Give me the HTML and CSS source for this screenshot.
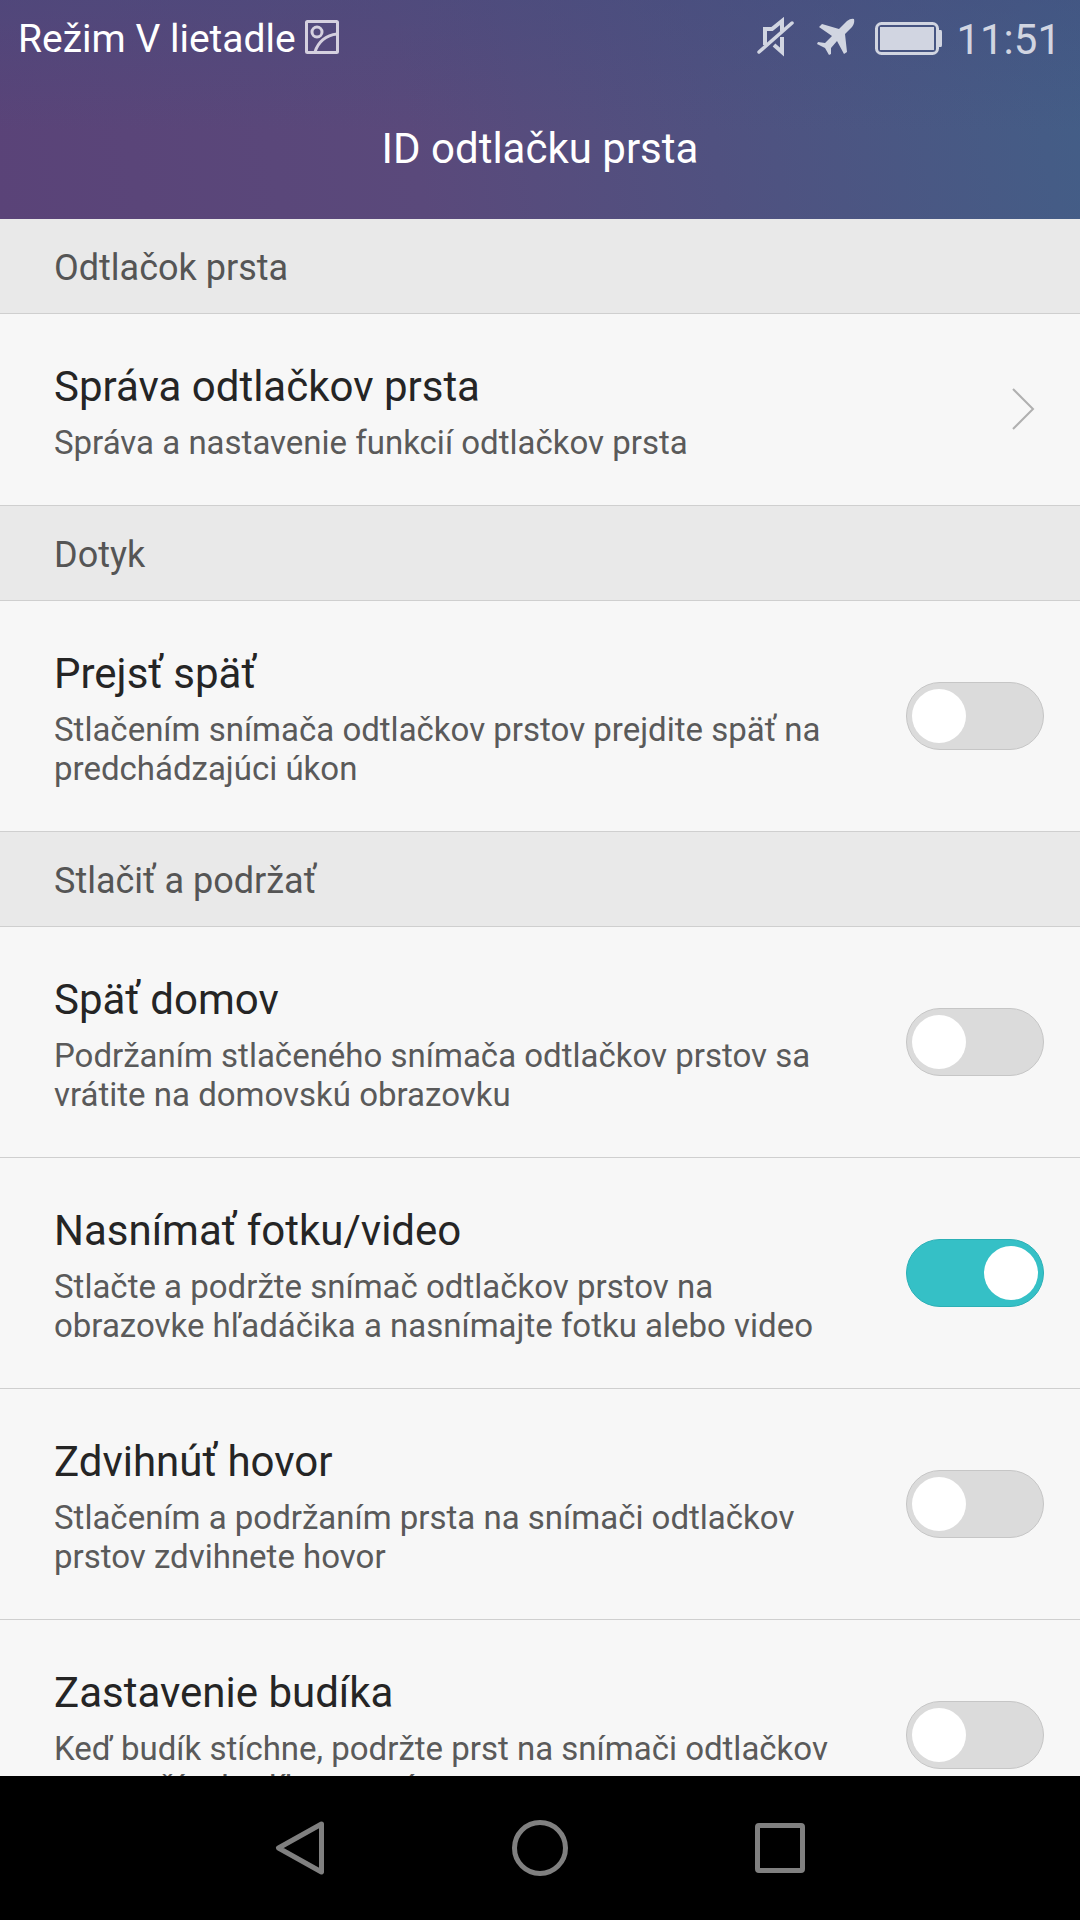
FILE: index.html
```html
<!DOCTYPE html>
<html lang="sk">
  <head>
    <meta charset="utf-8">
    <title>ID odtlačku prsta</title>
    <link rel="stylesheet" href="styles.css">
  </head>
  <body>
    <header class="header">
      <div class="status-bar">
        <span class="carrier">Režim V lietadle</span>
        <svg class="icon-image" width="34" height="34" viewBox="0 0 34 34">
          <rect x="1.5" y="1.5" width="31" height="31" rx="1"></rect>
          <circle cx="12" cy="12" r="5"></circle>
          <path d="M10 32C13 22 21 15 32 14"></path>
        </svg>
        <div class="status-icons">
          <svg class="icon-mute" width="38" height="40" viewBox="0 0 38 40">
            <path d="M8 28V12H15L25 4V14M25 20V35L17 28"></path>
            <path class="slash" d="M2 35L35 6"></path>
          </svg>
          <svg class="icon-plane" width="38" height="38" viewBox="0 0 38 38">
            <path d="M37 1Q34 0 30 3L22 11L5 6L2 9L15 18L8 25L1 24L0 26L8 30L12 37L14 36L14 30L20 23L27 36L30 34L28 16L35 9Q38 5 37 1Z"></path>
          </svg>
          <svg class="icon-battery" width="68" height="34" viewBox="0 0 68 34">
            <rect class="shell" x="1.5" y="1.5" width="61" height="30" rx="5"></rect>
            <rect class="level" x="5" y="5" width="54" height="23"></rect>
            <path class="level" d="M64 8H66Q67 8 67 10V23Q67 25 66 25H64Z"></path>
          </svg>
          <span class="clock">11:51</span>
        </div>
      </div>
      <h1 class="title">ID odtlačku prsta</h1>
    </header>

    <main class="settings">
      <h2 class="section">Odtlačok prsta</h2>
      <div class="item">
        <div class="text">
          <div class="name">Správa odtlačkov prsta</div>
          <div class="summary">Správa a nastavenie funkcií odtlačkov prsta</div>
        </div>
        <svg class="chevron" width="24" height="44" viewBox="0 0 24 44">
          <path d="M2 2L22 22L2 42"></path>
        </svg>
      </div>

      <h2 class="section">Dotyk</h2>
      <div class="item">
        <div class="text">
          <div class="name">Prejsť späť</div>
          <div class="summary">Stlačením snímača odtlačkov prstov prejdite späť na<br>predchádzajúci úkon</div>
        </div>
        <div class="switch"></div>
      </div>

      <h2 class="section">Stlačiť a podržať</h2>
      <div class="item">
        <div class="text">
          <div class="name">Späť domov</div>
          <div class="summary">Podržaním stlačeného snímača odtlačkov prstov sa<br>vrátite na domovskú obrazovku</div>
        </div>
        <div class="switch"></div>
      </div>
      <div class="item">
        <div class="text">
          <div class="name">Nasnímať fotku/video</div>
          <div class="summary">Stlačte a podržte snímač odtlačkov prstov na<br>obrazovke hľadáčika a nasnímajte fotku alebo video</div>
        </div>
        <div class="switch on"></div>
      </div>
      <div class="item">
        <div class="text">
          <div class="name">Zdvihnúť hovor</div>
          <div class="summary">Stlačením a podržaním prsta na snímači odtlačkov<br>prstov zdvihnete hovor</div>
        </div>
        <div class="switch"></div>
      </div>
      <div class="item">
        <div class="text">
          <div class="name">Zastavenie budíka</div>
          <div class="summary">Keď budík stíchne, podržte prst na snímači odtlačkov<br>prstov, čím budík zastavíte</div>
        </div>
        <div class="switch"></div>
      </div>
    </main>

    <nav class="nav-bar">
      <svg width="56" height="60" viewBox="0 0 56 60">
        <path d="M49.5 6L6.5 30L49.5 54Z"></path>
      </svg>
      <svg width="60" height="60" viewBox="0 0 60 60">
        <circle cx="30" cy="30" r="25.5"></circle>
      </svg>
      <svg width="56" height="60" viewBox="0 0 56 60">
        <rect x="5.5" y="7.5" width="45" height="45" rx="1.5"></rect>
      </svg>
    </nav>
  </body>
</html>
```
FILE: styles.css
```css
* {
  box-sizing: border-box;
}

body {
  display: flex;
  flex-direction: column;
  width: 1080px;
  height: 1920px;
  margin: 0;
  overflow: hidden;
  background-color: #f7f7f7;
  font-family: Roboto, sans-serif;
}

svg {
  flex: none;
  fill: none;
}

.header {
  flex: none;
  height: 219px;
  background:
    linear-gradient(rgba(66, 76, 126, 0.4), rgba(66, 76, 126, 0) 60%),
    linear-gradient(80deg, #5a4378 0%, #5a497b 38%, #505180 65%, #435e87 100%);
  color: #fff;
}

.status-bar {
  display: flex;
  align-items: center;
  height: 78px;
  padding: 0 19px 0 18px;
}

.carrier {
  font-size: 39px;
}

.icon-image {
  margin: -4px 0 0 9px;
  stroke: #d5d0df;
  stroke-width: 3;
}

.status-icons {
  display: flex;
  align-items: center;
  margin-left: auto;
}

.icon-mute {
  margin: -4px 22px 0 0;
  stroke: #d1d5e1;
  stroke-width: 4;
}

.icon-mute .slash {
  stroke-width: 3.5;
  stroke-linecap: round;
}

.icon-plane {
  margin: -4px 20px 0 0;
  fill: #d1d5e1;
}

.icon-battery {
  margin: -1px 13px 0 0;
}

.icon-battery .shell {
  stroke: #d1d5e1;
  stroke-width: 3;
}

.icon-battery .level {
  fill: #d1d5e1;
}

.clock {
  color: #d1d5e1;
  font-size: 42px;
}

.title {
  margin: 0;
  padding-top: 46px;
  font-size: 42px;
  font-weight: 400;
  line-height: 50px;
  text-align: center;
}

.settings {
  flex: 1;
  min-height: 0;
  overflow: hidden;
}

.section {
  height: 95px;
  margin: 0;
  padding: 2px 0 0 54px;
  border-bottom: 1px solid #cfcfcf;
  background-color: #e9e9e9;
  color: #555;
  font-size: 36px;
  font-weight: 400;
  line-height: 95px;
}

.item {
  display: flex;
  align-items: center;
  justify-content: space-between;
  padding: 48px 36px 43px 54px;
  border-bottom: 1px solid #cfcfcf;
}

.name {
  margin-bottom: 12px;
  color: #252525;
  font-size: 42px;
  line-height: 49px;
}

.summary {
  color: #5a5a5a;
  font-size: 33px;
  line-height: 39px;
  white-space: nowrap;
}

.chevron {
  margin: -6px 9px 0 0;
  stroke: #b0b0b0;
  stroke-width: 2;
}

.switch {
  flex: none;
  width: 138px;
  height: 68px;
  margin-top: -5px;
  padding: 6px 5px;
  border: 1px solid #c6c6c6;
  border-radius: 34px;
  background-color: #dbdbdb;
}

.switch::before {
  content: "";
  display: block;
  width: 54px;
  height: 54px;
  border-radius: 50%;
  background-color: #fff;
}

.switch.on {
  border-color: #2bb0b6;
  background-color: #35c0c6;
}

.switch.on::before {
  margin-left: auto;
}

.nav-bar {
  display: flex;
  flex: none;
  align-items: center;
  justify-content: center;
  gap: 182px;
  height: 144px;
  background-color: #000;
}

.nav-bar svg {
  stroke: #808080;
  stroke-width: 5;
  stroke-linejoin: round;
}
```
